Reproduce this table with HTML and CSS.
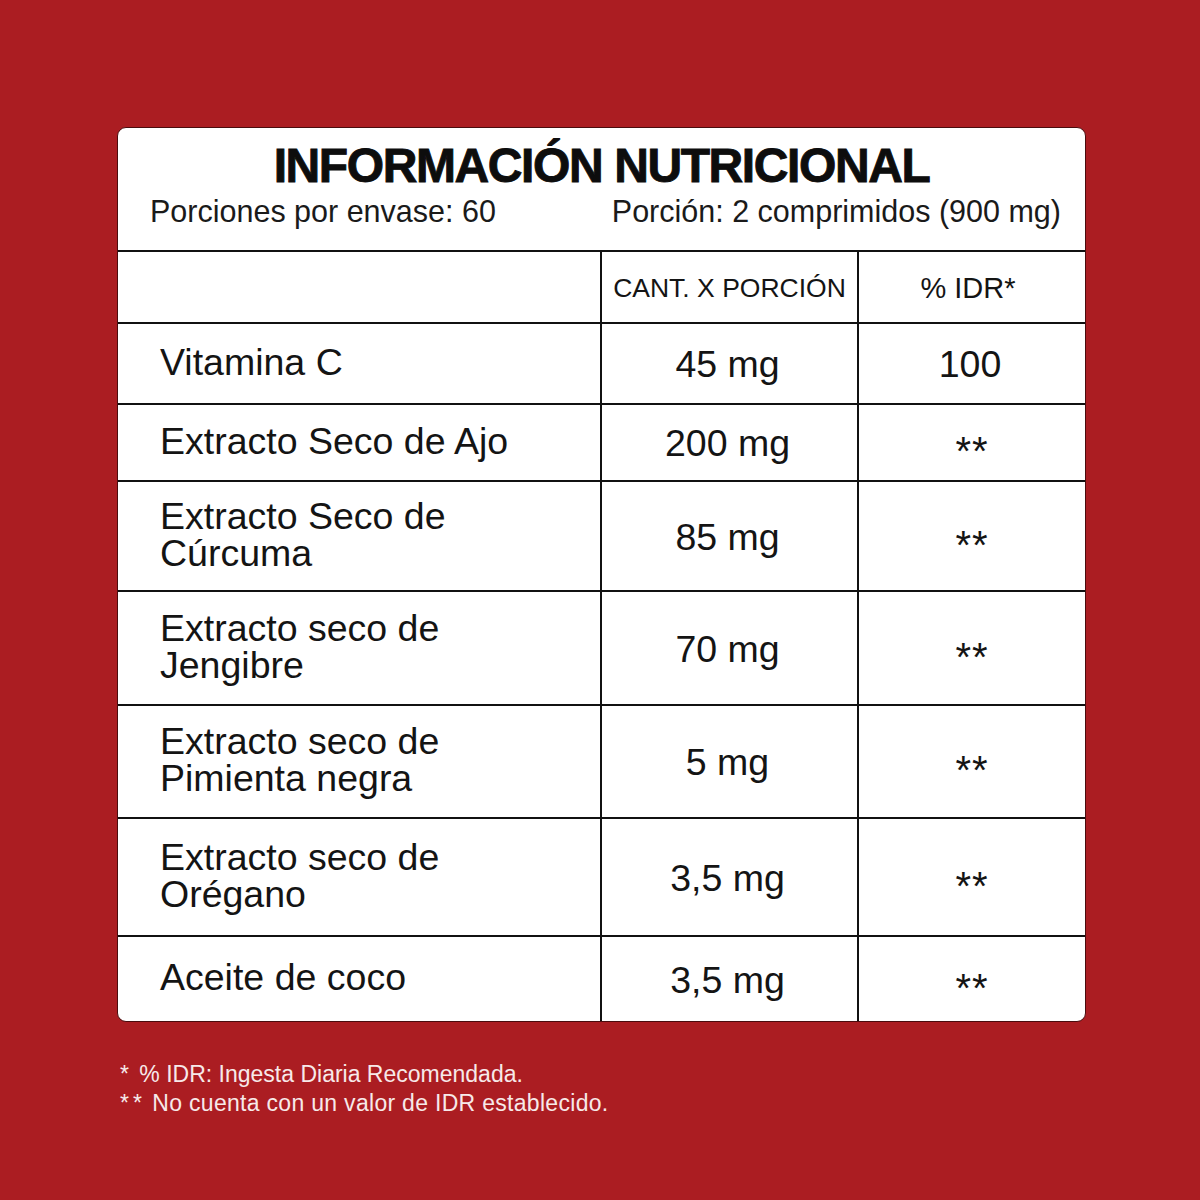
FILE: index.html
```html
<!DOCTYPE html>
<html lang="es">
<head>
<meta charset="utf-8">
<title>Información Nutricional</title>
<link rel="stylesheet" href="styles.css">
</head>
<body>
<main class="page">
  <section class="card">
    <header class="card-head">
      <h1 class="title">INFORMACIÓN NUTRICIONAL</h1>
      <div class="subline">
        <span>Porciones por envase: 60</span>
        <span>Porción: 2 comprimidos (900 mg)</span>
      </div>
    </header>
    <div class="table">
      <div class="cell name head"></div>
      <div class="cell val head small">CANT. X PORCIÓN</div>
      <div class="cell val head idr">% IDR*</div>

      <div class="cell name">Vitamina C</div>
      <div class="cell val">45 mg</div>
      <div class="cell val">100</div>

      <div class="cell name">Extracto Seco de Ajo</div>
      <div class="cell val">200 mg</div>
      <div class="cell val stars">**</div>

      <div class="cell name">Extracto Seco de<br>Cúrcuma</div>
      <div class="cell val">85 mg</div>
      <div class="cell val stars">**</div>

      <div class="cell name">Extracto seco de<br>Jengibre</div>
      <div class="cell val">70 mg</div>
      <div class="cell val stars">**</div>

      <div class="cell name">Extracto seco de<br>Pimienta negra</div>
      <div class="cell val">5 mg</div>
      <div class="cell val stars">**</div>

      <div class="cell name">Extracto seco de<br>Orégano</div>
      <div class="cell val">3,5 mg</div>
      <div class="cell val stars">**</div>

      <div class="cell name">Aceite de coco</div>
      <div class="cell val">3,5 mg</div>
      <div class="cell val stars">**</div>
    </div>
  </section>
  <footer class="notes">
    <p><span class="ast">*</span> % IDR: Ingesta Diaria Recomendada.</p>
    <p><span class="ast">**</span> <span class="wide">No cuenta con un valor de IDR establecido.</span></p>
  </footer>
</main>
</body>
</html>
```
FILE: styles.css
```css
html, body {
  margin: 0;
  padding: 0;
}
body {
  background: #ab1d22;
  font-family: "Liberation Sans", Arial, sans-serif;
  color: #111;
  width: 1200px;
  height: 1200px;
  overflow: hidden;
}
.page {
  padding: 127px 0 0 117px;
}
.card {
  width: 967px;
  background: #fff;
  border: 1px solid #4a0c0e;
  border-radius: 9px;
  overflow: hidden;
}
.card-head {
  padding: 14px 0 0;
  height: 108px;
}
.title {
  margin: 0;
  text-align: center;
  font-size: 48px;
  line-height: 48px;
  font-weight: 700;
  letter-spacing: -1.4px;
  color: #0d0d0d;
  -webkit-text-stroke: 0.9px #0d0d0d;
}
.subline {
  margin-top: 6px;
  display: flex;
  justify-content: space-between;
  padding: 0 24px 0 32px;
  font-size: 30.5px;
  line-height: 31px;
  color: #1a1a1a;
}
.table {
  display: grid;
  grid-template-columns: 482px 257px 228px;
  grid-template-rows: 72px 81px 77px 110px 114px 113px 118px 86px;
}
.cell {
  border-top: 2px solid #111;
  display: flex;
  align-items: center;
  font-size: 37.5px;
  line-height: 37px;
  color: #141414;
}
.name {
  padding-left: 42px;
  padding-bottom: 3px;
}
.val {
  border-left: 2px solid #111;
  justify-content: center;
  font-size: 37.5px;
  padding-top: 2px;
  padding-right: 4px;
}
.head.small {
  font-size: 26.5px;
  padding-top: 2px;
  padding-right: 0;
}
.head.idr {
  font-size: 29px;
  padding-top: 2px;
  padding-right: 8px;
}
.stars {
  font-size: 40px;
  letter-spacing: 1px;
  padding-top: 18px;
  padding-right: 0;
}
.notes {
  margin-top: 38px;
  padding-left: 3px;
  color: #f7e9e9;
  font-size: 23px;
  line-height: 29px;
}
.notes p {
  margin: 0;
}
.ast {
  letter-spacing: 4px;
}
.wide {
  letter-spacing: 0.3px;
}
```
